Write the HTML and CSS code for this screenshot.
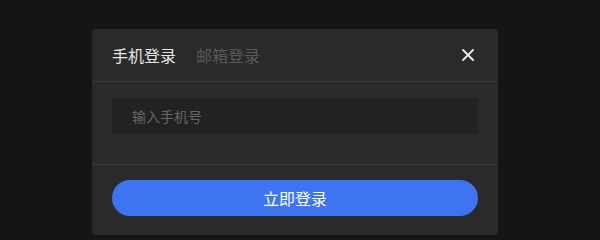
FILE: index.html
```html
<!DOCTYPE html>
<html lang="zh-CN">
<head>
<meta charset="utf-8">
<title>登录</title>
<link rel="stylesheet" href="styles.css">
</head>
<body>
<div class="modal">
  <div class="modal-header">
    <div class="tabs">
      <span class="tab active">手机登录</span>
      <span class="tab">邮箱登录</span>
    </div>
    <button class="close" aria-label="关闭">
      <svg width="12" height="12" viewBox="0 0 12 12"><path d="M1 1L11 11M11 1L1 11" stroke="#ececec" stroke-width="1.9" stroke-linecap="square" fill="none"/></svg>
    </button>
  </div>
  <div class="modal-body">
    <input class="phone" type="text" placeholder="输入手机号">
  </div>
  <div class="modal-footer">
    <button class="submit">立即登录</button>
  </div>
</div>
</body>
</html>
```
FILE: styles.css
```css
html, body {
  margin: 0;
  padding: 0;
}
body {
  background: #151515;
  width: 600px;
  height: 240px;
  font-family: "Noto Sans CJK SC", "Noto Sans", sans-serif;
  overflow: hidden;
}
.modal {
  margin: 29px 0 0 92px;
  width: 406px;
  background: #2a2a2a;
  border-radius: 4px;
}
.modal-header {
  height: 52px;
  display: flex;
  align-items: center;
  justify-content: space-between;
  padding: 0 24px 0 20px;
  border-bottom: 1px solid #3a3a3a;
}
.tabs {
  display: flex;
  gap: 20px;
}
.tab {
  font-size: 16px;
  line-height: 20px;
  color: #595959;
}
.tab.active {
  color: #e6e6e6;
}
.close {
  background: none;
  border: 0;
  padding: 0;
  width: 12px;
  height: 12px;
  display: flex;
  cursor: pointer;
}
.modal-body {
  padding: 16px 20px 30px;
  border-bottom: 1px solid #3a3a3a;
}
.phone {
  display: block;
  box-sizing: border-box;
  width: 100%;
  height: 36px;
  border: 0;
  border-radius: 2px;
  background: #222222;
  padding: 0 20px;
  font-family: inherit;
  font-size: 14px;
  color: #ddd;
  outline: none;
}
.phone::placeholder {
  color: #666666;
}
.modal-footer {
  padding: 15px 20px 19px;
}
.submit {
  display: block;
  width: 100%;
  height: 36px;
  border: 0;
  border-radius: 18px;
  background: #3e73f1;
  color: #ffffff;
  font-family: inherit;
  font-size: 16px;
  cursor: pointer;
}
```
